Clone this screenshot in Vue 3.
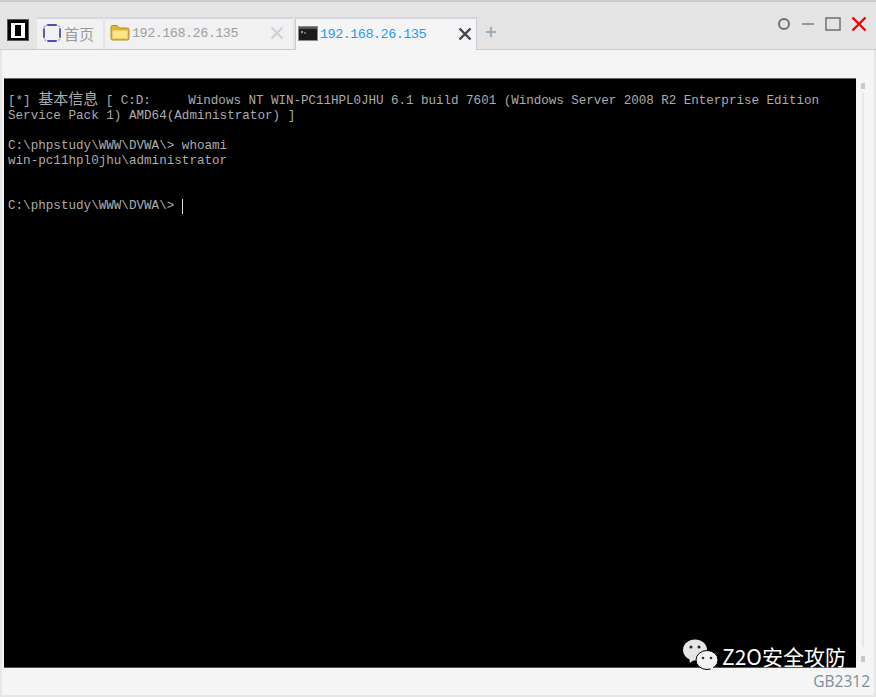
<script setup>
const tabs = [
  { id: 'f', label: '192.168.26.135' },
]
const firstRest = ' [ C:D:     Windows NT WIN-PC11HPL0JHU 6.1 build 7601 (Windows Server 2008 R2 Enterprise Edition'
const lines = [
  { cjk: true },
  { text: 'Service Pack 1) AMD64(Administrator) ]' },
  { text: '' },
  { text: 'C:\\phpstudy\\WWW\\DVWA\\> whoami' },
  { text: 'win-pc11hpl0jhu\\administrator' },
  { text: '' },
  { text: '' },
  { text: 'C:\\phpstudy\\WWW\\DVWA\\> ', cursor: true },
]
</script>

<template>
  <div class="win">
    <header class="bar">
      <div class="logo"><span class="logo-in"></span></div>
      <div class="tab home">
        <svg class="home-ic" width="18" height="18" viewBox="0 0 18 18">
          <rect x="1" y="1" width="16" height="16" rx="3.500" fill="none" stroke="#8c8cd0" stroke-width="1.400" stroke-dasharray="1.600 1.200"/>
          <path d="M4.500 1h9M4.500 17h9M1 4.500v9M17 4.500v9" stroke="#4c50b4" stroke-width="1.800" fill="none"/>
        </svg>
        <span class="cjk-title">首页</span>
      </div>
      <div class="tab folder" v-for="t in tabs" :key="t.id">
        <svg class="ic" width="20" height="18" viewBox="0 0 20 18">
          <path d="M1 3Q1 1.500 2.500 1.500H7l2 2.500h8.500Q19 4 19 5.500v9q0 1.500-1.500 1.500h-15Q1 16 1 14.500Z" fill="#e2b43a" stroke="#b48c24" stroke-width="1"/>
          <path d="M2.500 6.500h15v8h-15Z" fill="#fbe48a"/>
        </svg>
        <span class="addr">{{ t.label }}</span>
        <svg class="x" width="14" height="14" viewBox="0 0 14 14">
          <path d="M1.500 1.500l11 11M12.500 1.500l-11 11" stroke="#cfcfd8" stroke-width="2.200"/>
        </svg>
      </div>
      <div class="tab active">
        <svg class="ic" width="20" height="15" viewBox="0 0 20 15">
          <rect x=".5" y=".5" width="19" height="14" fill="#1c1c1c" stroke="#8a8a8a"/>
          <rect x="1" y="1" width="18" height="2" fill="#555"/>
          <path d="M3 5l2 1-2 1M6 7h2" stroke="#ddd" stroke-width=".8" fill="none"/>
        </svg>
        <span class="addr blue">192.168.26.135</span>
        <svg class="x xa" width="14" height="14" viewBox="0 0 14 14">
          <path d="M1.500 1.500l11 11M12.500 1.500l-11 11" stroke="#3a4450" stroke-width="2.400"/>
        </svg>
      </div>
      <svg class="plus" width="12" height="12" viewBox="0 0 12 12">
        <path d="M6 1v10M1 6h10" stroke="#a2aeb8" stroke-width="2.200"/>
      </svg>
      <div class="ctrls">
        <svg width="14" height="14" viewBox="0 0 14 14"><circle cx="7" cy="7" r="5" fill="none" stroke="#707070" stroke-width="2"/></svg>
        <svg width="14" height="14" viewBox="0 0 14 14"><path d="M1 7h12" stroke="#707070" stroke-width="1.400"/></svg>
        <svg width="16" height="14" viewBox="0 0 16 14"><rect x="1" y="1" width="14" height="12" fill="none" stroke="#707070" stroke-width="1.500"/></svg>
        <svg width="16" height="16" viewBox="0 0 16 16"><path d="M1.500 1.500l13 13M14.500 1.500l-13 13" stroke="#f40000" stroke-width="2.400"/></svg>
      </div>
    </header>

    <main class="body">
      <div class="term">
        <div class="line" v-for="(l, i) in lines" :key="i">
          <template v-if="l.cjk">{{ '[*] ' }}<span class="cjk">基本信息</span><span class="rest">{{ firstRest }}</span></template>
          <template v-else>{{ l.text }}<span v-if="l.cursor" class="cursor"></span></template>
        </div>
      </div>
      <div class="scroll">
        <span class="knob"></span>
        <span class="track"></span>
        <span class="knob"></span>
      </div>
    </main>

    <footer class="status">GB2312</footer>

    <div class="mark">
      <svg width="38" height="38" viewBox="0 0 38 38">
        <ellipse cx="13" cy="13" rx="12" ry="10.500" fill="#e6e6e6"/>
        <path d="M7 20l1 6 5-4Z" fill="#e6e6e6"/>
        <circle cx="9" cy="10" r="1.500" fill="#222"/>
        <circle cx="17" cy="10" r="1.500" fill="#222"/>
        <ellipse cx="25" cy="23" rx="11" ry="9.500" fill="#f2f2f2" stroke="#000" stroke-width="1"/>
        <path d="M28 31l4 5-1-7Z" fill="#f2f2f2"/>
        <circle cx="21" cy="21" r="1.300" fill="#333"/>
        <circle cx="29" cy="21" r="1.300" fill="#333"/>
      </svg>
      <span>Z2O安全攻防</span>
    </div>
  </div>
</template>

<style>
html, body { margin: 0; background: #f5f5f5; }
</style>

<style scoped>
.win {
  position: relative;
  width: 876px;
  height: 697px;
  box-sizing: border-box;
  display: flex;
  flex-direction: column;
  background: #e6e6e6;
  border-top: 2px solid #c9c9d3;
  padding: 0 0 2px;
  overflow: hidden;
  font-family: "Liberation Sans", sans-serif;
}
.bar {
  height: 48px;
  flex: none;
  display: flex;
  align-items: flex-end;
  background: #e4e4e4;
  border-bottom: 1px solid #c9c9d8;
  box-sizing: border-box;
  padding-left: 7px;
}
.logo {
  width: 22px;
  height: 22px;
  margin: 0 8px 8px 0;
  box-sizing: border-box;
  background: #000;
  border: 1px solid #555;
  display: flex;
  align-items: center;
  justify-content: center;
}
.logo-in {
  width: 6px;
  height: 11px;
  border: 4px solid #fff;
  border-top-width: 2px;
  border-bottom-width: 2px;
  box-sizing: content-box;
  background: #000;
}
.tab {
  height: 32px;
  box-sizing: border-box;
  display: flex;
  align-items: center;
  background: #f1f1f1;
  border-top: 2px solid #d6d6e0;
  margin-right: 2px;
  padding-bottom: 2px;
}
.home { width: 66px; padding-left: 6px; gap: 3px; }
.cjk-title { font: 15px/1 "Noto Sans CJK SC", sans-serif; color: #9a9a9a; }
.folder { width: 188px; padding-left: 5px; gap: 2px; }
.ic { margin-top: -1px; }
.addr {
  font: 13.5px/1 "Liberation Mono", monospace;
  letter-spacing: -.53px;
  color: #9e9ea2;
  white-space: nowrap;
  flex: 1;
  padding-top: 2px;
}
.blue { color: #1e9bf5; }
.x { margin-right: 9px; }
.xa { margin-right: 4px; }
.active {
  width: 182px;
  height: 33px;
  margin: 0 0 -1px;
  padding-left: 2px;
  gap: 2px;
  background: #f5f5f5;
  border-right: 1px solid #c9c9d8;
  border-left: 1px solid #c9c9d8;
}
.plus { margin: 0 0 11px 8px; }
.ctrls {
  margin-left: auto;
  align-self: flex-start;
  padding: 14px 9px 0 0;
  display: flex;
  align-items: center;
  gap: 10px;
}
.body {
  flex: 1;
  display: flex;
  background: #f5f5f5;
  margin: 0 2px;
  padding: 28px 0 0 2px;
  min-height: 0;
}
.term {
  width: 852px;
  background: #000;
  border-top: 1px solid #666;
  border-bottom: 1px solid #555;
  box-sizing: border-box;
  padding: 15px 0 0 4px;
  color: #acacac;
  font: 12.6px/15px "Liberation Mono", monospace;
  white-space: pre;
}
.line { height: 15px; }
.cjk { font: 15px/0 "Noto Sans CJK SC", sans-serif; }
.rest { letter-spacing: -.05px; }
.cursor {
  display: inline-block;
  width: 1.500px;
  height: 15px;
  background: #e0e0e0;
  vertical-align: top;
}
.scroll {
  flex: 1;
  display: flex;
  flex-direction: column;
  align-items: center;
  padding: 5px 5px 6px 0;
}
.knob { width: 4px; height: 6px; background: #c8c8c8; }
.track { flex: 1; width: 2px; margin: 4px 0 9px; background: #e6e6e6; }
.status {
  height: 27px;
  flex: none;
  margin: 0 2px;
  background: #f5f5f5;
  color: #808c9a;
  font: 15.5px/27px "Open Sans", sans-serif;
  text-align: right;
  padding-right: 4px;
  box-sizing: border-box;
}
.mark {
  position: absolute;
  left: 682px;
  top: 635px;
  display: flex;
  align-items: center;
  gap: 2px;
  color: #fff;
  font: 21px "Noto Sans CJK SC", sans-serif;
  white-space: nowrap;
}
</style>
